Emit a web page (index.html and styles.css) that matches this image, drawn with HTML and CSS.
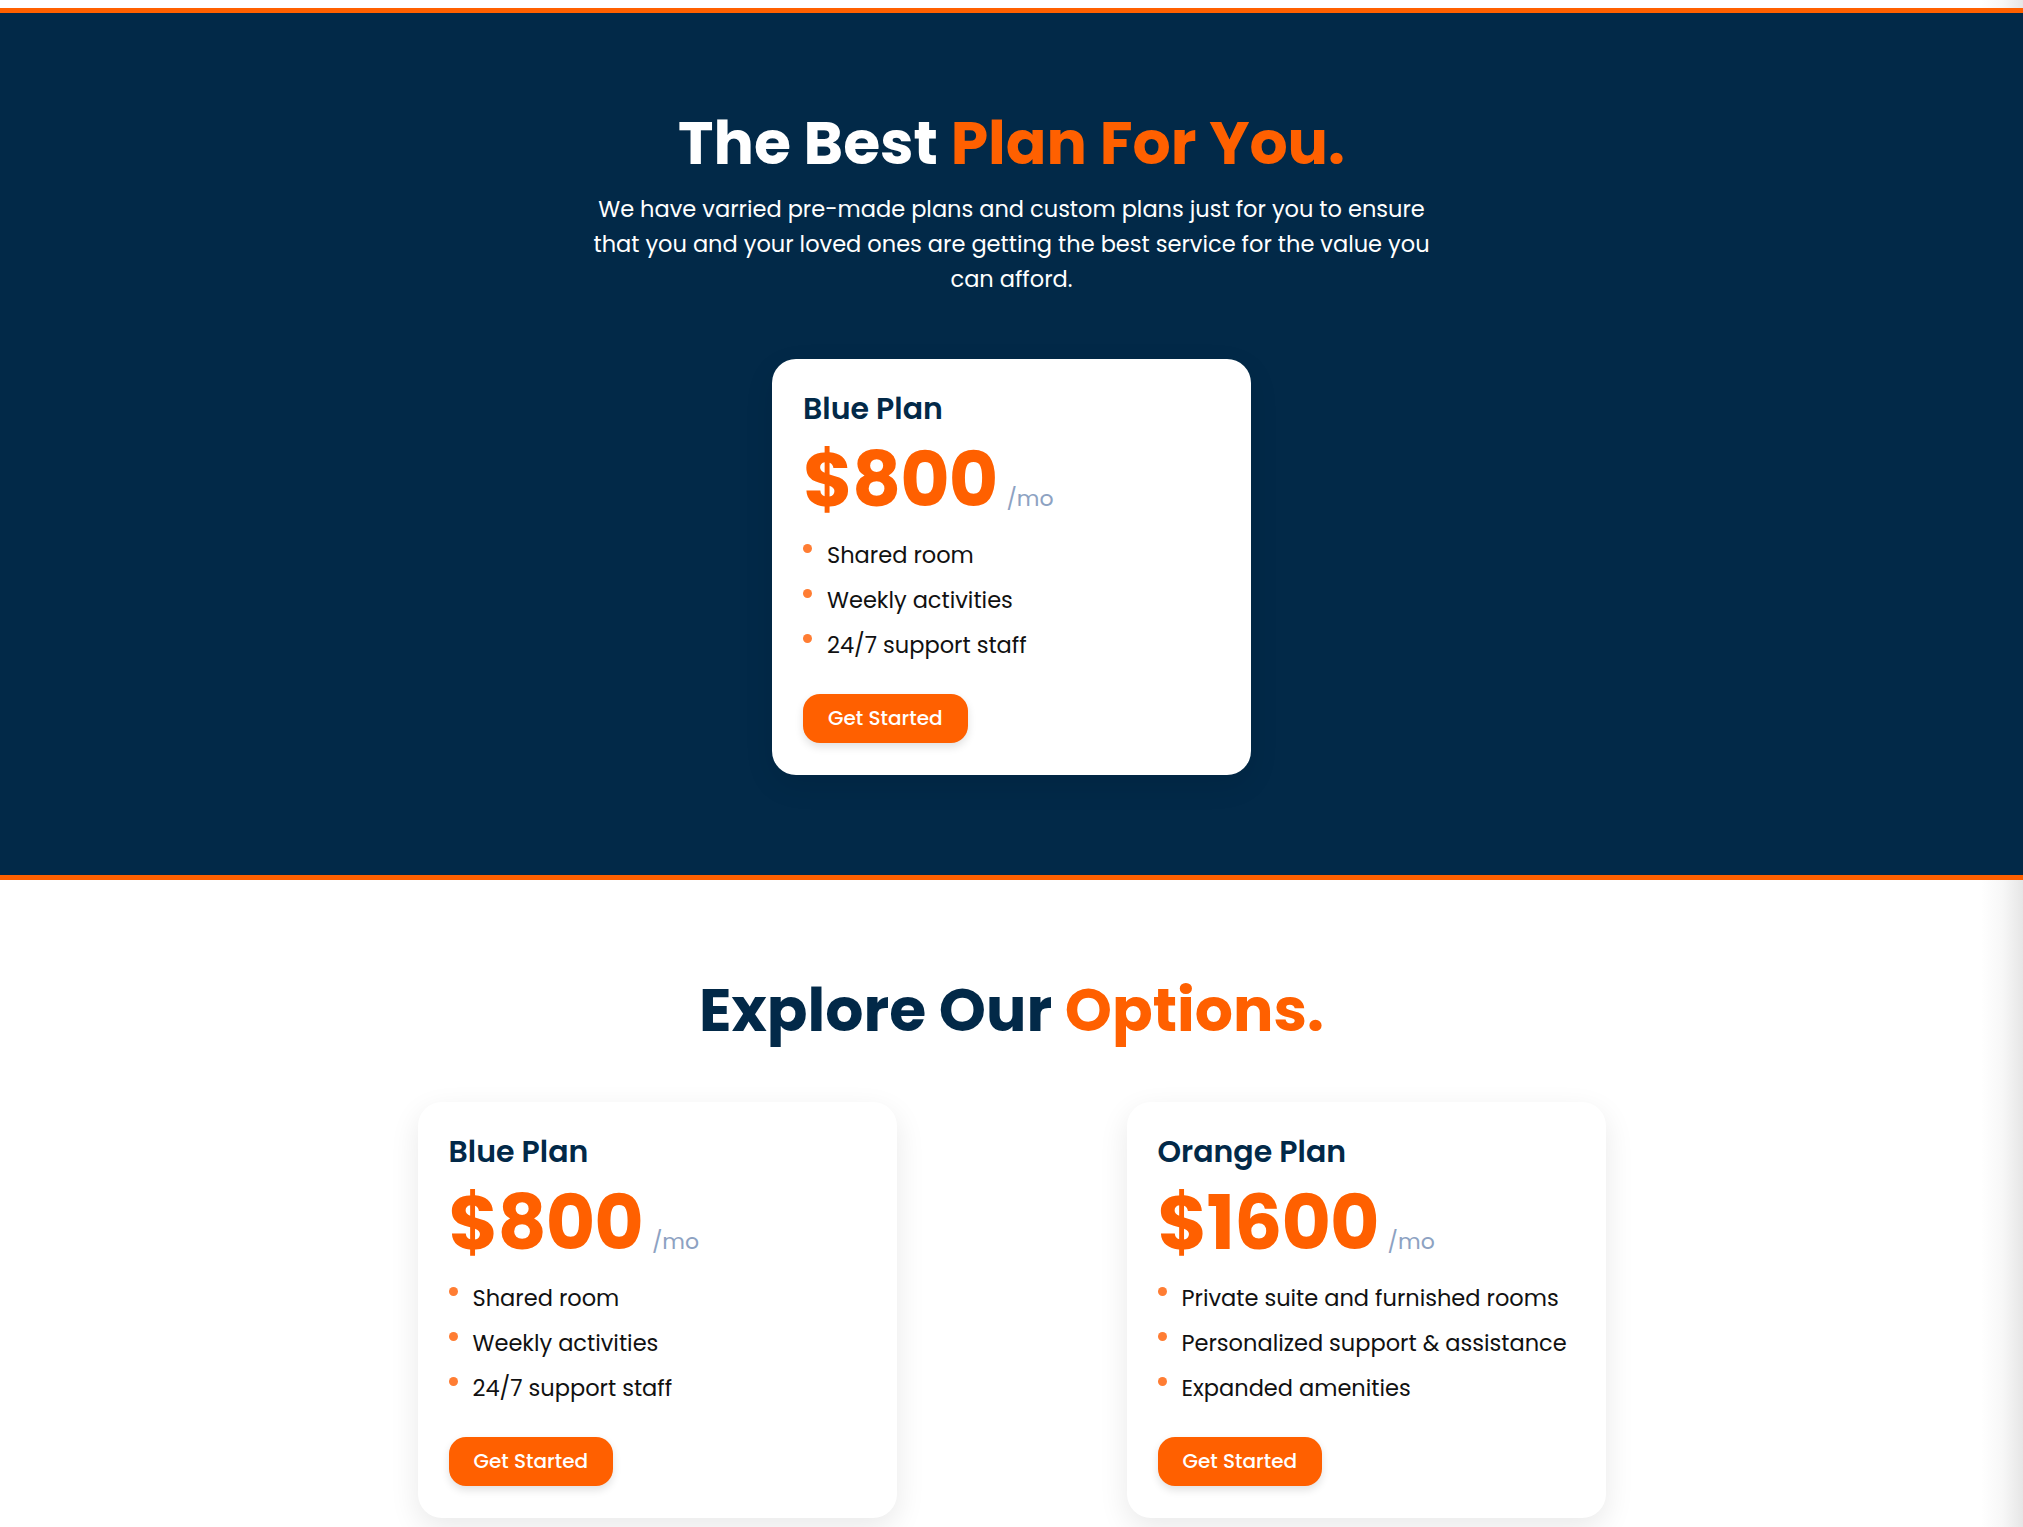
FILE: index.html
```html
<!DOCTYPE html>
<html lang="en">
<head>
<meta charset="utf-8">
<title>Plans</title>
<link rel="stylesheet" href="styles.css">
</head>
<body>
  <section class="hero">
    <h1 class="title title--light">The Best <span class="accent">Plan For You.</span></h1>
    <p class="lead">We have varried pre-made plans and custom plans just for you to ensure<br>that you and your loved ones are getting the best service for the value you<br>can afford.</p>
    <div class="plan plan--hero">
      <h3 class="plan-name">Blue Plan</h3>
      <div class="price"><span class="amount">$800</span><span class="per">/mo</span></div>
      <ul class="features">
        <li>Shared room</li>
        <li>Weekly activities</li>
        <li>24/7 support staff</li>
      </ul>
      <a class="btn" href="#">Get Started</a>
    </div>
  </section>

  <section class="options">
    <h2 class="title title--dark">Explore Our <span class="accent">Options.</span></h2>
    <div class="plan-grid">
      <div class="plan">
        <h3 class="plan-name">Blue Plan</h3>
        <div class="price"><span class="amount">$800</span><span class="per">/mo</span></div>
        <ul class="features">
          <li>Shared room</li>
          <li>Weekly activities</li>
          <li>24/7 support staff</li>
        </ul>
        <a class="btn" href="#">Get Started</a>
      </div>
      <div class="plan">
        <h3 class="plan-name">Orange Plan</h3>
        <div class="price"><span class="amount">$1600</span><span class="per">/mo</span></div>
        <ul class="features">
          <li>Private suite and furnished rooms</li>
          <li>Personalized support &amp; assistance</li>
          <li>Expanded amenities</li>
        </ul>
        <a class="btn" href="#">Get Started</a>
      </div>
    </div>
  </section>
</body>
</html>
```

FILE: styles.css
```css
html, body {
  margin: 0;
}

body {
  padding-top: 8px;
  font-family: "Poppins", "Inter", "Noto Sans", sans-serif;
  color: #111;
  background: linear-gradient(to right, #ffffff calc(100% - 42px), #f7f7f7 calc(100% - 20px), #e6e6e6 100%);
}

.hero {
  background: #022948;
  border-top: 5px solid #ff6000;
  border-bottom: 5px solid #ff6000;
  padding: 92px 0 100px;
  text-align: center;
}

.title {
  margin: 0;
  font-size: 60px;
  font-weight: 700;
  line-height: 77px;
}

.title--light {
  color: #ffffff;
}

.title--dark {
  color: #022948;
}

.accent {
  color: #ff6000;
}

.lead {
  margin: 10px auto 0;
  font-size: 22.5px;
  line-height: 35px;
  color: #ffffff;
}

.plan {
  box-sizing: border-box;
  width: 479px;
  padding: 30px 31px 32px;
  background: #ffffff;
  border-radius: 24px;
  text-align: left;
  box-shadow: 0 10px 30px rgba(0, 0, 0, 0.09);
}

.plan--hero {
  margin: 62px auto 0;
}

.plan-name {
  margin: 0;
  font-size: 30px;
  font-weight: 600;
  line-height: 40px;
  color: #022948;
}

.price {
  display: flex;
  align-items: baseline;
  gap: 9px;
  margin-top: 13px;
  height: 76px;
}

.amount {
  font-size: 76px;
  font-weight: 700;
  line-height: 76px;
  color: #ff6000;
  letter-spacing: -1px;
}

.per {
  font-size: 22px;
  line-height: 30px;
  color: #8da2c2;
}

.features {
  list-style: none;
  margin: 15px 0 0;
  padding: 0;
}

.features li {
  position: relative;
  padding-left: 24px;
  font-size: 22.5px;
  line-height: 45px;
  color: #111111;
}

.features li::before {
  content: "";
  position: absolute;
  left: 0;
  top: 11px;
  width: 9px;
  height: 9px;
  border-radius: 50%;
  background: #ff7d33;
}

.btn {
  display: block;
  width: fit-content;
  margin-top: 26px;
  height: 49px;
  padding: 0 25px;
  line-height: 49px;
  border-radius: 17px;
  background: #ff6000;
  color: #ffffff;
  font-size: 20px;
  font-weight: 500;
  text-decoration: none;
  box-shadow: 0 4px 8px rgba(0, 0, 0, 0.12);
}

.options {
  padding: 92px 0 60px;
  text-align: center;
}

.plan-grid {
  display: grid;
  grid-template-columns: 479px 479px;
  column-gap: 230px;
  justify-content: center;
  margin-top: 53px;
}
```
